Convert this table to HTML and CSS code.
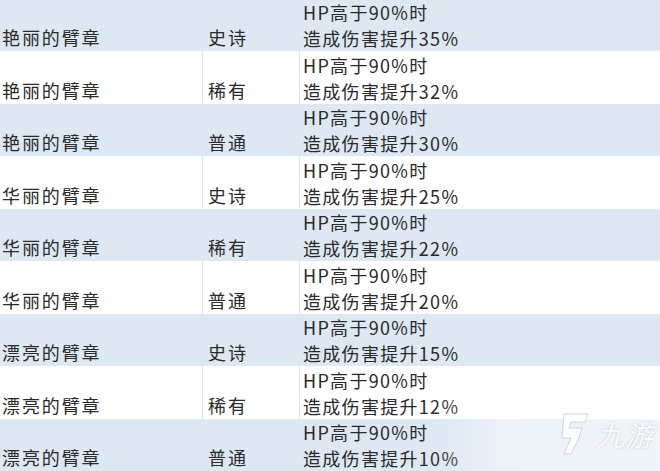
FILE: index.html
```html
<!DOCTYPE html>
<html lang="zh-CN">
<head>
<meta charset="utf-8">
<title>臂章</title>
<link rel="stylesheet" href="styles.css">
</head>
<body>
<div class="table">
  <div class="row alt"><div class="c1">艳丽的臂章</div><div class="c2">史诗</div><div class="c3"><div>HP高于90%时</div><div>造成伤害提升35%</div></div></div>
  <div class="row"><div class="c1">艳丽的臂章</div><div class="c2">稀有</div><div class="c3"><div>HP高于90%时</div><div>造成伤害提升32%</div></div></div>
  <div class="row alt"><div class="c1">艳丽的臂章</div><div class="c2">普通</div><div class="c3"><div>HP高于90%时</div><div>造成伤害提升30%</div></div></div>
  <div class="row"><div class="c1">华丽的臂章</div><div class="c2">史诗</div><div class="c3"><div>HP高于90%时</div><div>造成伤害提升25%</div></div></div>
  <div class="row alt"><div class="c1">华丽的臂章</div><div class="c2">稀有</div><div class="c3"><div>HP高于90%时</div><div>造成伤害提升22%</div></div></div>
  <div class="row"><div class="c1">华丽的臂章</div><div class="c2">普通</div><div class="c3"><div>HP高于90%时</div><div>造成伤害提升20%</div></div></div>
  <div class="row alt"><div class="c1">漂亮的臂章</div><div class="c2">史诗</div><div class="c3"><div>HP高于90%时</div><div>造成伤害提升15%</div></div></div>
  <div class="row"><div class="c1">漂亮的臂章</div><div class="c2">稀有</div><div class="c3"><div>HP高于90%时</div><div>造成伤害提升12%</div></div></div>
  <div class="row alt"><div class="c1">漂亮的臂章</div><div class="c2">普通</div><div class="c3"><div>HP高于90%时</div><div>造成伤害提升10%</div></div></div>
</div>
<div class="watermark">
  <div class="haze"></div>
  <svg class="logo" width="34" height="48" viewBox="0 0 34 48">
    <path d="M6 4 L30 4 L27 12 L13 12 L11 18 L24 18 L20 30 L13 44 L6 44 L13 28 L4 28 Z" fill="rgba(255,255,255,0.9)" stroke="rgba(180,190,200,0.6)" stroke-width="1"/>
  </svg>
  <span class="wm-text">九游</span>
</div>
</body>
</html>
```

FILE: styles.css
```css
html, body {
  margin: 0;
  padding: 0;
  background: #ffffff;
  overflow: hidden;
}
body {
  width: 660px;
  height: 471px;
  position: relative;
  font-family: "Noto Sans CJK SC", "Noto Sans", sans-serif;
  color: #2a2a2a;
}
.table {
  margin-top: -1.5px;
}
.row {
  display: grid;
  grid-template-columns: 202px 97px 1fr;
  height: 52.5px;
  align-items: end;
}
.alt {
  background: #dde8f3;
}
.c1, .c2, .c3 {
  font-size: 18px;
  line-height: 26px;
  letter-spacing: 1.9px;
  height: 100%;
  display: flex;
  flex-direction: column;
  justify-content: flex-end;
  box-sizing: border-box;
  padding-bottom: 1px;
}
.c1 {
  padding-left: 2px;
}
.c2 {
  padding-left: 5px;
  border-left: 1px solid #e2e4e6;
}
.c3 {
  padding-left: 3px;
  border-left: 1px solid #e2e4e6;
  letter-spacing: 1.3px;
  padding-bottom: 0;
}
.alt .c2, .alt .c3 {
  border-left-color: #dde8f3;
}
.watermark {
  position: absolute;
  right: 0;
  bottom: 0;
  width: 230px;
  height: 75px;
  display: flex;
  align-items: center;
  justify-content: flex-end;
  padding-right: 6px;
  box-sizing: border-box;
  gap: 4px;
}
.haze {
  position: absolute;
  inset: 0;
  background: linear-gradient(90deg, rgba(255,255,255,0) 0%, rgba(255,255,255,0.45) 35%, rgba(255,255,255,0.55) 100%);
}
.logo {
  position: relative;
}
.wm-text {
  position: relative;
  font-size: 28px;
  font-style: italic;
  color: rgba(255,255,255,0.95);
  text-shadow: 0 0 2px rgba(150,160,170,0.6);
  letter-spacing: 1px;
}
```
